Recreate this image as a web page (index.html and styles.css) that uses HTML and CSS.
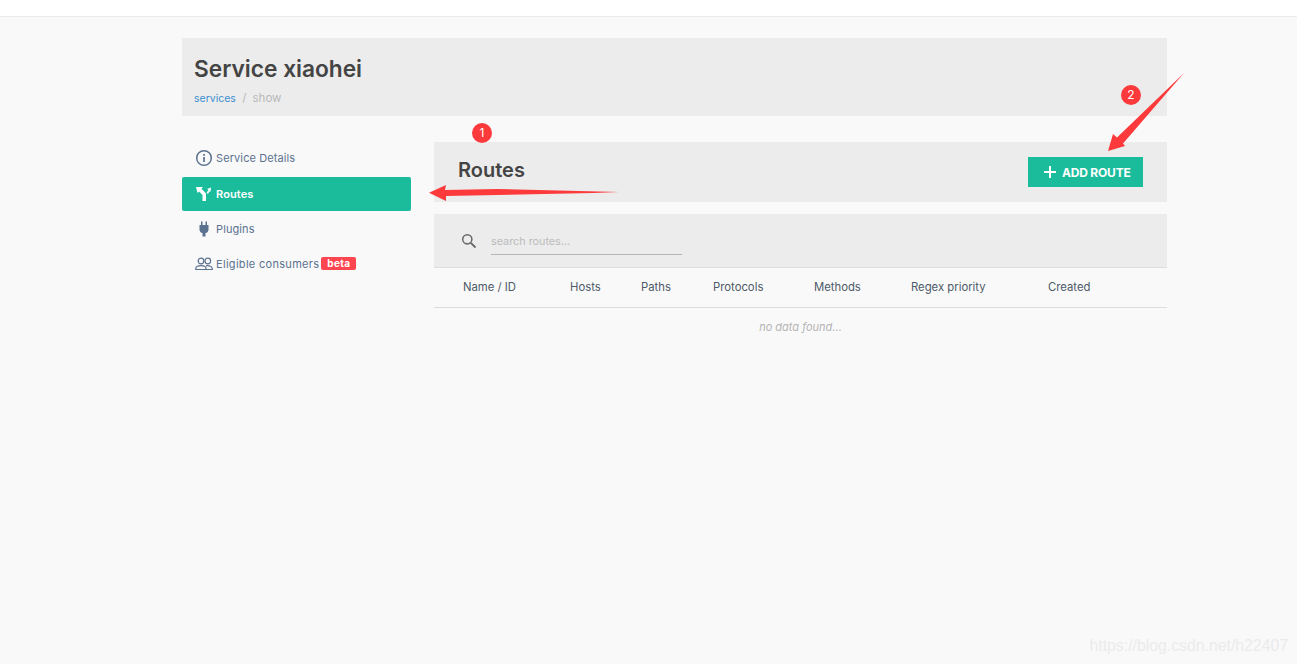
FILE: index.html
```html
<!DOCTYPE html>
<html lang="en">
<head>
  <meta charset="UTF-8">
  <title>Service xiaohei</title>
  <link rel="stylesheet" href="styles.css">
</head>
<body>
  <div class="topbar"></div>

  <div class="container">
    <div class="page-header">
      <h1>Service xiaohei</h1>
      <div class="breadcrumb">
        <a href="#">services</a>
        <span class="sep">/</span>
        <span class="current">show</span>
      </div>
    </div>

    <div class="columns">
      <ul class="sidebar">
        <li class="side-item first">
          <svg class="side-icon" viewBox="0 0 18 18" width="18" height="18">
            <circle cx="9" cy="9" r="7.3" fill="none" stroke="#5b7290" stroke-width="1.5"/>
            <rect x="8.2" y="8" width="1.7" height="5" fill="#5b7290"/>
            <rect x="8.2" y="5" width="1.7" height="1.8" fill="#5b7290"/>
          </svg>
          Service Details
        </li>
        <li class="side-item active">
          <svg class="side-icon" viewBox="0 0 18 18" width="18" height="18">
            <path d="M1 2h7L6.500 3.800 11 8.500V16H7.500V10L4 6.500 2.500 8z" fill="#fff"/>
            <path d="M11.500 7.500 13.500 5.300 12.200 4 16 2.500 15.500 6.800 14.800 6.300 12.800 9z" fill="#fff"/>
          </svg>
          Routes
        </li>
        <li class="side-item">
          <svg class="side-icon" viewBox="0 0 18 18" width="18" height="18">
            <path d="M6 1.500h1.500V5h3V1.500H12V5h1.500v4.500c0 2-1.300 3.300-3 3.600V16.500h-3v-3.400c-1.700-.3-3-1.600-3-3.600V5H6z" fill="#5b7290"/>
          </svg>
          Plugins
        </li>
        <li class="side-item wide">
          <svg class="side-icon" viewBox="0 0 18 18" width="18" height="18">
            <g fill="none" stroke="#5b7290" stroke-width="1.200">
              <circle cx="6" cy="6" r="2.800"/>
              <circle cx="12.800" cy="6" r="2.800"/>
              <path d="M.8 14.500v-.8c0-2 2-3 5.200-3s5 1 5 3v.8z"/>
              <path d="M11 10.800c3.600-.4 6.300.6 6.300 2.900v.8h-6.300"/>
            </g>
          </svg>
          Eligible consumers
          <span class="beta">beta</span>
        </li>
      </ul>

      <div class="main">
        <div class="routes-head">
          <h2>Routes</h2>
          <button class="add-btn" type="button">
            <svg viewBox="0 0 14 14" width="14" height="14">
              <path d="M6 1h2v5h5v2H8v5H6V8H1V6h5z" fill="#fff"/>
            </svg>
            ADD ROUTE
          </button>
        </div>

        <div class="search-bar">
          <svg viewBox="0 0 18 18" width="18" height="18">
            <circle cx="7.300" cy="7.300" r="4.600" fill="none" stroke="#666" stroke-width="1.500"/>
            <path d="M10.800 10.800 15.500 15.500" stroke="#666" stroke-width="1.800"/>
          </svg>
          <div class="search-input">search routes...</div>
        </div>

        <div class="table-head">
          <span>Name / ID</span>
          <span>Hosts</span>
          <span>Paths</span>
          <span>Protocols</span>
          <span>Methods</span>
          <span>Regex priority</span>
          <span>Created</span>
        </div>
        <div class="no-data">no data found...</div>
      </div>
    </div>
  </div>

  <!-- red annotations drawn on top of the screenshot -->
  <svg class="marks" width="1297" height="664" viewBox="0 0 1297 664">
    <path d="M429 192.700 446 185 445 190 497 189 619 192 593 193 446 196 446 201z" fill="#fc3a3c"/>
    <path d="M1184 73 1117 137.500 1113 134 1108 151 1125 146 1123 143.500z" fill="#fc3a3c"/>
    <circle cx="482" cy="133" r="10" fill="#fc3a3c"/>
    <circle cx="1131" cy="95" r="10" fill="#fc3a3c"/>
  </svg>
  <span class="mark-num one">1</span>
  <span class="mark-num two">2</span>

  <div class="watermark">https://blog.csdn.net/h22407</div>
</body>
</html>
```

FILE: styles.css
```css
* {
  box-sizing: border-box;
}

html, body {
  height: 100%;
}

body {
  margin: 0;
  background: #f9f9f9;
  font-family: "Inter", "Open Sans", sans-serif;
  color: #444;
  overflow: hidden;
  position: relative;
}

.topbar {
  height: 17px;
  background: #fff;
  border-bottom: 1px solid #ececec;
}

.container {
  width: 985px;
  margin: 21px 0 0 182px;
}

.page-header {
  height: 78px;
  background: #ececec;
  padding: 17px 12px 0;
}

h1 {
  margin: 0;
  font-size: 22.700px;
  line-height: 28px;
  font-weight: 600;
  color: #444;
}

.breadcrumb {
  margin-top: 7px;
  font-size: 11.500px;
  line-height: 16px;
  color: #b9b9b9;
}

.breadcrumb a {
  font-size: 10.500px;
  color: #3d8fd1;
  text-decoration: none;
}

.sep {
  margin: 0 3px;
}

.columns {
  display: flex;
  gap: 23px;
  margin-top: 26px;
}

/* left menu */
.sidebar {
  list-style: none;
  margin: -1px 0 0;
  padding: 0;
  width: 229px;
}

.side-item {
  display: flex;
  align-items: center;
  height: 35px;
  padding-left: 13px;
  font-size: 11px;
  letter-spacing: .1px;
  color: #5b7290;
}

.side-item.first {
  padding-bottom: 1px;
}

.side-item.wide {
  letter-spacing: .3px;
}

.side-icon {
  margin-right: 3px;
  flex: none;
}

.side-item.active {
  height: 34px;
  margin-top: 1px;
  background: #1abc9c;
  color: #fff;
  border-radius: 2px;
  font-weight: 600;
}

.beta {
  margin-left: 2px;
  padding: 0 6px;
  height: 13px;
  line-height: 13px;
  border-radius: 2px;
  background: #ff4550;
  color: #fff;
  font-size: 10px;
  font-weight: 700;
}

/* main column */
.main {
  width: 733px;
}

.routes-head {
  display: flex;
  align-items: center;
  justify-content: space-between;
  height: 60px;
  padding: 0 24px 4px;
  background: #ececec;
}

h2 {
  margin: 0;
  font-size: 20px;
  font-weight: 600;
  color: #444;
}

.add-btn {
  display: flex;
  align-items: center;
  gap: 5px;
  width: 115px;
  height: 30px;
  margin-top: 4px;
  padding: 0 0 0 15px;
  border: 0;
  background: #1abc9c;
  color: #fff;
  font-family: inherit;
  font-size: 12px;
  font-weight: 700;
  letter-spacing: -.2px;
}

.search-bar {
  display: flex;
  align-items: center;
  gap: 13px;
  height: 54px;
  margin-top: 12px;
  padding-left: 26px;
  background: #ececec;
  border-bottom: 1px solid #ddd;
}

.search-input {
  width: 191px;
  height: 28px;
  padding-top: 8px;
  border-bottom: 1px solid #b5b5b5;
  font-size: 10.800px;
  color: #bbb;
}

.table-head {
  display: grid;
  grid-template-columns: 107px 71px 72px 101px 97px 137px 1fr;
  align-items: center;
  height: 40px;
  padding: 0 0 1px 29px;
  border-bottom: 1px solid #ddd;
  font-size: 11.300px;
  color: #4d5a68;
}

.no-data {
  margin-top: 12px;
  text-align: center;
  font-size: 11px;
  font-style: italic;
  color: #b5b5b5;
  line-height: 14px;
}

/* annotations */
.marks {
  position: absolute;
  left: 0;
  top: 0;
}

.mark-num {
  position: absolute;
  width: 20px;
  text-align: center;
  color: #fff;
  font-size: 12px;
  line-height: 20px;
}

.mark-num.one {
  left: 472px;
  top: 123px;
}

.mark-num.two {
  left: 1121px;
  top: 85px;
}

.watermark {
  position: absolute;
  right: 9px;
  bottom: 9px;
  font-family: "Liberation Sans", sans-serif;
  font-size: 15.800px;
  color: #ebebeb;
}
```
